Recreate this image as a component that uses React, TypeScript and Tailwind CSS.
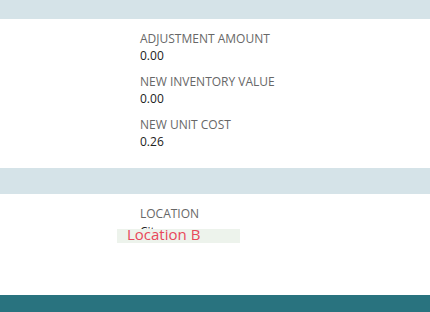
const fields = [
  { label: 'ADJUSTMENT AMOUNT', value: '0.00' },
  { label: 'NEW INVENTORY VALUE', value: '0.00' },
  { label: 'NEW UNIT COST', value: '0.26' },
];

function Field({ label, value }: { label: string; value: string }) {
  return (
    <div className="mb-[9px]">
      <div className="text-[12px] leading-[17px] text-[#676767]">{label}</div>
      <div className="text-[12px] leading-[17px] text-[#222]">{value}</div>
    </div>
  );
}

export default function App() {
  return (
    <div className="w-[430px] h-[312px] overflow-hidden bg-white flex flex-col" style={{ fontFamily: '"Open Sans", "Liberation Sans", sans-serif' }}>
      <div className="h-[19px] shrink-0 bg-[#d5e3e8]" />

      <div className="h-[149px] shrink-0 pt-[11px] pl-[140px]">
        {fields.map((f) => (
          <Field key={f.label} label={f.label} value={f.value} />
        ))}
      </div>

      <div className="h-[26px] shrink-0 bg-[#d5e3e8]" />

      <div className="h-[101px] shrink-0 pt-[11px] relative">
        <div className="pl-[140px]">
          <div className="text-[12px] leading-[17px] text-[#676767]">LOCATION</div>
          {/* old value, mostly hidden under the change marker */}
          <div className="h-[17px] pt-[1px]">
            <div className="h-[6px] overflow-hidden text-[12px] leading-[17px] text-[#222]">City</div>
          </div>
        </div>
        {/* changed value overlay */}
        <div className="absolute left-[117px] top-[35px] w-[123px] h-[14px] bg-[#edf3ec] pl-[10px]">
          <span className="block text-[15px] leading-[10px] text-[#e8475a] whitespace-nowrap">Location B</span>
        </div>
      </div>

      <div className="h-[17px] shrink-0 bg-[#29737f]" />
    </div>
  );
}
